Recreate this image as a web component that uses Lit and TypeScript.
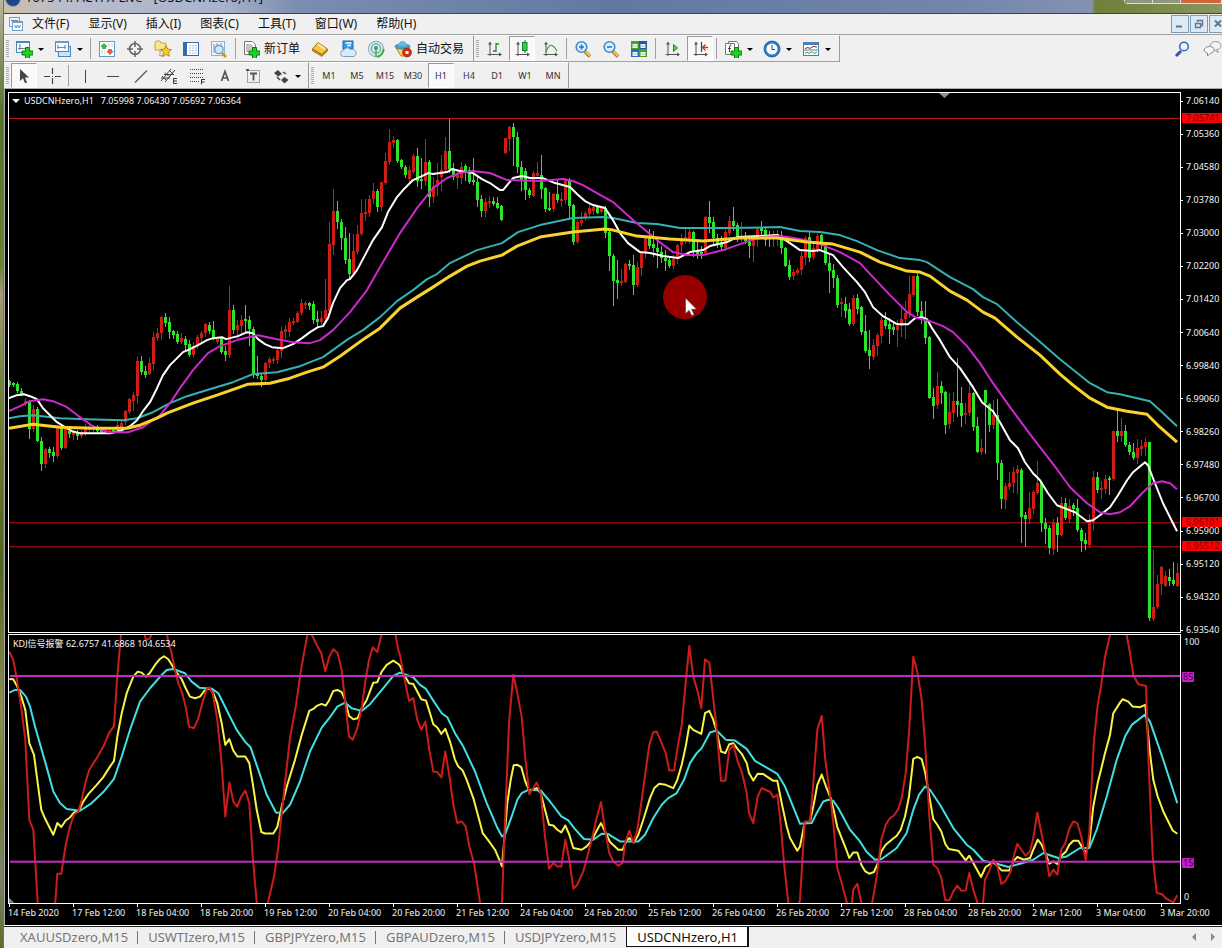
import { LitElement, html, css, svg, nothing } from "lit";
import { customElement, state } from "lit/decorators.js";
import { classMap } from "lit/directives/class-map.js";
import { styleMap } from "lit/directives/style-map.js";

/* One bar every 4 units: high, body top, body bottom, low, then u (red) or d (green). */
const CANDLES = `380,381,385,386d 382,383,385,386d 382,384,391,392d 388,391,394,395d 398,401,404,405u 400,401,429,438d 405,409,429,431u 407,409,441,441d
437,441,464,470d 448,449,464,467u 447,449,453,457d 447,452,456,461d 425,427,456,457u 425,427,448,449d 427,428,448,448u 429,431,434,437d
430,432,435,439u 430,432,436,439d 430,432,436,437u 424,428,434,435u 425,427,430,432u 427,428,430,432u 425,427,431,432d 427,429,432,433d
429,430,432,433u 429,430,432,433u 428,430,432,433d 422,425,430,431u 421,423,428,429u 410,411,422,424u 398,399,412,413u 392,395,401,410u
357,361,396,403u 356,361,372,374d 366,371,375,377d 358,363,374,374u 332,337,364,369u 328,333,338,340u 316,317,333,339u 313,317,323,326d
317,322,332,338d 330,331,335,338d 331,334,342,343d 333,338,342,343u 336,339,345,349d 340,344,355,356d 342,346,355,357u 335,337,346,348u
331,333,338,343u 323,324,333,336u 322,325,331,333d 321,330,338,339d 338,339,342,343u 337,338,352,353d 346,351,355,360d 286,310,355,357u
305,310,330,333d 320,325,330,338u 315,320,326,333u 305,319,321,333d 316,320,329,345d 327,329,374,377d 356,373,376,378d 373,376,380,386d
362,363,380,383u 357,359,363,367u 357,359,361,363u 347,350,360,363u 327,331,351,357u 325,329,332,338u 318,322,332,336u 318,321,323,324u
311,313,322,322u 299,303,313,314u 301,303,305,308u 302,303,306,309d 301,304,320,323d 311,319,322,327d 311,318,322,324u 279,310,319,321u
222,244,311,312u 189,211,245,254u 201,211,222,228d 219,222,238,249d 227,238,260,263d 233,259,274,278d 234,251,273,275u 225,234,252,253u
199,213,234,235u 199,212,214,220u 195,199,213,216u 183,191,199,203u 189,191,207,211d 182,182,207,210u 153,161,183,184u 129,142,162,164u
136,140,143,147u 139,140,161,162d 159,160,167,168d 165,167,175,177d 166,170,179,181u 154,156,172,173u 148,156,181,186d 158,179,181,188d
139,162,181,185u 160,162,197,206d 177,186,197,202u 163,180,186,195u 155,170,177,190u 137,151,170,172u 119,151,169,172d 163,169,177,179d
170,175,178,188u 162,167,178,183u 164,166,171,180d 167,170,182,183d 158,180,182,184d 175,182,200,206d 195,199,211,216d 198,202,211,216u
196,201,203,207u 197,201,204,205d 197,203,208,208d 205,206,220,220d 138,138,153,153u 126,127,139,150u 123,127,137,165d 132,137,167,172d
161,167,181,190d 168,171,190,199d 188,190,195,197d 171,173,196,196u 162,173,176,178u 155,175,189,198d 187,188,209,211d 192,208,210,210d
193,194,209,211u 180,194,200,202d 192,199,201,206u 178,180,200,203u 178,180,206,217d 204,205,242,244d 220,222,242,243u 212,220,223,225u
211,213,217,220u 205,208,214,217u 205,207,211,214u 205,207,213,213d 207,208,212,213u 206,208,233,237d 231,232,256,270d 254,256,281,305d
260,280,283,298d 269,281,283,285u 263,264,282,282u 260,264,266,269d 255,265,285,294d 262,267,285,286u 252,253,268,275u 237,238,253,257u
229,238,246,248d 231,244,248,256d 240,248,252,267d 246,252,258,262d 250,258,261,270d 257,260,266,267d 255,259,266,268u 244,245,259,263u
234,240,245,251u 228,237,241,243u 228,232,240,243u 231,232,252,256d 240,250,256,258d 246,252,256,258d 216,217,253,253u 201,217,223,232d
217,222,238,243d 234,238,244,247d 236,242,247,249d 230,232,248,250u 216,221,233,235u 207,221,226,230d 223,225,236,241d 222,237,239,241u
232,238,241,243d 238,240,246,257d 236,240,246,261u 228,229,240,246u 221,228,231,236d 226,230,240,245d 231,236,239,246d 231,234,239,246u
230,234,238,245u 231,235,248,253d 247,248,266,266d 260,265,277,279d 269,272,276,279u 268,270,273,274u 249,256,270,274u 236,238,257,264u
231,237,258,261d 243,248,257,258u 234,236,249,252u 234,235,244,248d 242,243,263,264d 255,263,271,292d 264,270,278,287d 275,278,305,307d
298,302,304,316u 297,304,311,317d 303,309,324,325d 295,298,324,325u 294,298,309,313d 306,307,332,334d 315,331,351,352d 330,350,356,368d
339,345,357,359u 333,335,346,355u 317,320,336,342u 312,320,326,328d 318,324,329,343d 322,327,330,334d 320,326,330,346u 308,319,326,336u
301,313,319,338u 276,294,314,317u 276,276,295,296u 273,276,312,315d 301,311,318,323d 301,320,338,343d 336,337,398,398d 388,397,406,418d
372,386,405,408u 381,386,393,403d 391,392,425,433d 393,412,424,428u 392,401,413,421u 358,401,405,416d 387,403,416,426d 403,413,415,423u
381,393,413,415u 392,393,427,430d 417,426,452,452d 439,448,452,454u 390,390,403,453d 403,404,425,431d 400,415,425,428u 399,415,463,479d
460,463,499,508d 483,486,500,508u 472,483,487,489u 467,472,483,492u 465,469,473,493u 468,470,517,542d 512,515,519,546d 492,508,519,523u
490,492,509,513u 461,483,493,494u 481,482,523,531d 518,523,529,543d 525,528,548,553d 519,523,549,554u 517,523,535,551d 497,503,535,535u
498,503,518,519d 499,506,519,521u 503,505,509,515d 499,508,530,531d 528,530,541,551d 533,540,544,549d 514,520,545,547u 471,477,522,529u
472,477,490,492d 481,488,490,498u 475,479,489,493u 476,478,480,494d 431,431,479,480u 411,431,436,441d 418,431,436,441u 425,431,445,446d
442,445,452,454d 443,452,458,459d 439,448,458,463u 440,446,449,455u 438,442,447,455u 442,442,618,620d 550,607,619,620u 575,584,607,608u
566,567,584,594u 571,576,586,586u 569,577,581,585d 562,580,584,585d 563,573,586,586u`
  .split(/\s+/)
  .map((bar) => {
    const [high, top, bottom, low] = bar.slice(0, -1).split(",").map(Number);
    return { high, top, bottom, low, up: bar.endsWith("u") };
  });

const FAST = `9,398 17,395 24,394 30,396 37,399 43,408 50,415 57,422 65,427 72,431 80,433 110,433 122,430 130,426 137,420 143,411 150,402 157,388 163,375 170,365 177,358 183,352 190,349 198,345 207,340 213,338 222,337 226,339 230,338 238,336 247,332 253,333 258,339 265,344 272,347 283,348 293,344 302,338 310,332 318,327 323,326 328,318 333,303 340,288 347,280 350,279 357,270 365,255 373,240 382,227 388,212 397,197 403,190 413,180 422,176 428,173 433,174 447,172 452,169 460,171 473,173 482,179 490,183 500,190 503,190 513,178 522,176 530,178 543,178 555,183 570,187 577,194 585,201 593,205 605,208 613,220 620,233 628,243 640,252 650,253 663,256 678,258 690,252 703,250 710,246 727,242 737,237 760,236 778,235 787,241 800,250 813,251 820,250 833,255 843,267 857,282 865,292 873,307 883,316 897,324 908,324 915,318 922,317 927,319 932,328 940,340 950,357 960,368 973,387 982,402 993,411 1000,422 1010,440 1018,448 1025,462 1033,473 1040,480 1048,493 1057,505 1075,512 1087,521 1093,520 1100,515 1110,507 1118,495 1127,480 1133,472 1145,462 1148,465 1153,478 1163,503 1173,523 1177,531`;
const MEDIUM = `9,411 20,406 30,401 43,399 53,401 67,407 80,417 93,426 108,432 128,432 143,427 160,415 170,403 180,388 193,370 208,353 220,346 240,339 258,335 277,339 293,342 310,343 320,340 333,330 350,312 367,290 383,262 400,233 417,208 433,188 447,178 460,173 473,171 490,173 507,180 540,181 563,179 573,181 583,185 597,193 613,202 633,220 657,240 673,252 687,255 703,255 723,250 743,243 760,237 780,236 800,239 820,244 840,252 860,263 873,277 890,295 907,312 917,318 930,321 943,326 953,332 967,346 980,363 993,383 1010,407 1033,438 1057,469 1070,487 1087,503 1100,512 1110,514 1120,512 1130,506 1143,492 1153,483 1162,481 1170,483 1177,489`;
const SLOW = `9,418 20,416 33,415 60,418 87,419 123,420 137,418 153,412 170,403 187,396 213,388 233,382 253,374 277,372 300,366 323,357 348,339 363,330 380,317 397,301 413,290 427,279 437,274 450,263 477,250 502,243 518,232 540,225 573,218 603,217 613,218 637,223 657,224 680,228 727,228 780,227 800,231 820,232 840,235 857,241 877,250 900,258 920,260 927,262 950,277 973,289 983,297 997,304 1017,322 1037,339 1060,359 1090,383 1107,392 1120,394 1150,401 1160,410 1177,426`;
const SLOWEST = `9,428 33,424 60,427 93,428 127,428 140,425 157,418 167,413 193,403 217,395 237,388 248,384 270,383 290,378 307,372 323,367 340,356 365,338 380,328 400,308 417,297 433,287 450,276 467,266 480,261 502,255 517,246 540,237 573,232 605,229 613,230 637,236 670,239 703,241 740,238 777,238 807,242 833,244 860,252 880,262 907,271 920,272 930,276 950,291 967,300 983,312 995,318 1017,337 1040,355 1060,374 1073,385 1090,398 1107,407 1127,411 1147,414 1160,427 1177,442`;

/* Oscillator samples come in three blocks of 400 units; each block counts in thirds of a unit. */
const joinBlocks = (...blocks: string[]) =>
  blocks
    .map((block, i) =>
      block
        .trim()
        .split(/\s+/)
        .map((p) => {
          const [x, y] = p.split(",").map(Number);
          return `${(i * 400 + x / 3).toFixed(1)},${(y / 3).toFixed(1)}`;
        })
        .join(" ")
    )
    .join(" ");

const LINE_J = joinBlocks(
  `28,65 40,90 52,155 64,235 76,330 88,570 100,600 113,818 118,850 160,850 166,818 172,732 184,732 197,645 210,590 222,555 235,545 245,510 257,455 268,420 290,385 310,350 327,310 342,288 351,150 363,15 370,-20 425,-20 438,30 450,25 465,-20 495,-20 505,35 514,65 525,120 535,160 547,190 558,235 567,290 582,295 595,265 608,215 620,178 628,172 638,190 652,270 664,390 676,560 688,458 700,515 711,531 724,500 736,482 748,520 758,680 770,818 778,850 796,850 804,818 822,740 834,660 845,550 857,440 870,325 888,225 903,120 920,25 928,-5 936,15 950,45 964,70 976,124 988,80 1000,58 1013,70 1025,120 1036,220 1047,320 1058,330 1072,295 1085,235 1096,155 1107,90 1118,52 1132,66 1144,15 1155,-20 1182,-10 1195,60`,
  `0,75 12,140 27,213 40,205 52,270 64,300 76,275 88,360 100,425 112,427 124,443 136,365 150,450 160,525 172,580 185,575 197,590 208,650 222,700 240,818 245,850 303,850 306,818 312,650 327,280 340,135 350,180 365,260 376,385 388,493 410,458 422,490 435,620 447,717 460,700 472,710 484,710 496,630 508,690 520,777 532,765 550,725 575,630 590,565 603,517 615,600 628,670 640,695 655,708 668,700 675,640 688,603 700,640 712,600 725,510 740,400 748,345 760,307 770,305 785,340 797,370 808,422 822,422 835,340 845,285 855,180 868,47 880,140 893,185 904,235 915,88 928,98 937,180 950,300 963,453 976,453 988,360 1000,345 1013,395 1025,425 1040,490 1047,550 1060,580 1073,500 1085,475 1100,482 1110,485 1120,503 1132,495 1140,560 1152,700 1165,818 1170,850 1192,850`,
  `0,810 14,575 30,575 40,460 52,300 65,258 76,390 90,495 100,580 112,715 125,760 140,818 143,830 155,830 160,780 172,762 184,818 190,835 212,835 217,818 230,740 244,630 257,585 270,565 282,557 295,538 305,505 317,430 327,310 340,80 352,125 365,210 376,350 388,560 400,705 412,715 424,745 436,812 448,812 460,785 472,768 484,783 497,782 508,730 520,780 532,818 538,835 548,830 555,750 567,725 580,690 592,710 604,763 615,755 632,725 640,685 652,642 664,660 677,678 690,665 700,625 712,548 722,600 736,670 748,740 760,720 772,735 784,660 796,640 808,597 820,575 832,580 845,625 857,692 868,610 873,500 882,330 893,225 903,170 915,80 930,15 935,-15 975,-10 980,15 990,70 1000,135 1015,163 1038,168 1045,380 1058,680 1070,790 1085,793 1100,808 1120,818 1132,797`
);
const LINE_K = joinBlocks(
  `28,147 40,148 52,170 64,200 76,240 88,340 102,375 113,460 124,540 136,568 148,592 160,615 172,580 184,592 197,572 210,563 222,548 235,545 250,515 265,493 290,465 310,442 327,415 342,393 352,320 365,250 380,190 400,140 413,125 425,128 437,140 450,128 465,105 480,87 492,79 505,88 520,112 530,128 545,148 557,175 570,200 585,205 600,200 613,183 628,174 640,190 652,220 665,280 676,345 688,328 700,362 712,380 736,380 748,400 758,460 770,540 784,607 795,611 820,611 832,592 845,530 862,465 885,390 905,315 928,243 940,237 950,228 965,222 977,227 988,210 1000,183 1012,180 1025,187 1035,210 1047,258 1060,268 1073,265 1085,235 1100,210 1120,158 1132,157 1145,125 1160,105 1180,92 1195,102`,
  `0,108 10,130 27,160 40,162 64,208 78,212 90,250 100,283 112,293 124,312 136,297 150,335 165,390 175,410 188,422 200,450 220,505 235,560 248,610 265,632 285,660 300,695 306,710 312,640 322,520 332,450 341,406 352,405 364,412 376,455 388,483 410,475 422,490 435,540 447,585 460,587 472,600 484,608 496,587 508,615 520,655 545,660 560,650 575,632 590,603 603,580 615,605 630,637 655,660 668,660 680,632 688,625 702,638 715,615 730,570 750,505 763,475 778,462 797,465 820,475 832,450 845,405 857,350 868,287 880,300 904,312 915,250 928,243 940,270 950,305 963,365 976,370 988,343 1000,340 1013,358 1025,372 1040,400 1047,430 1060,452 1073,432 1090,433 1120,453 1132,453 1145,520 1160,590 1170,625 1192,663`,
  `0,650 14,578 30,575 42,520 52,465 65,434 78,470 92,505 102,545 112,592 125,625 137,655 148,685 160,668 172,668 184,705 196,725 208,732 222,727 234,700 244,665 257,645 275,630 290,618 302,600 315,560 327,500 340,387 352,381 365,388 376,430 388,500 400,568 412,585 424,605 436,643 446,658 475,663 497,692 508,678 520,700 543,742 557,712 580,697 605,722 628,722 640,695 652,682 672,690 690,685 700,660 713,630 725,645 736,670 748,702 760,695 772,703 784,678 798,665 808,645 820,633 835,633 845,650 857,670 868,640 880,530 893,460 903,420 915,370 930,315 940,250 960,218 968,208 985,215 998,230 1020,232 1036,225 1042,290 1050,370 1060,450 1073,500 1090,545 1118,602 1132,612`
);
const LINE_D = joinBlocks(
  `28,188 45,180 60,180 78,200 90,230 105,290 125,360 145,430 160,485 180,520 200,538 240,543 275,520 310,487 342,447 365,380 390,300 420,215 450,175 485,135 500,120 520,117 555,130 575,155 598,173 635,176 655,190 685,250 710,300 735,335 752,353 775,420 800,495 828,548 848,550 870,525 900,455 930,365 965,293 990,262 1012,230 1035,218 1055,235 1085,243 1110,223 1150,175 1180,138`,
  `0,128 40,142 60,165 78,177 100,212 125,250 142,262 165,310 190,350 225,425 260,520 290,590 306,620 315,615 335,560 352,510 365,490 385,480 422,482 450,515 484,560 505,572 525,598 552,628 580,630 605,612 625,613 660,635 715,635 735,615 760,565 785,525 805,505 830,490 852,450 870,400 890,370 905,355 930,308 950,302 978,330 1005,332 1040,357 1065,393 1132,432 1155,470 1175,520`,
  `0,582 35,580 50,550 70,515 85,510 100,513 115,535 150,600 180,635 200,667 225,690 245,688 290,655 320,610 340,540 357,495 375,470 390,480 420,525 460,595 500,645 520,660 550,693 590,702 625,712 660,702 700,690 730,670 775,685 800,680 840,655 868,655 890,600 920,500 950,390 975,320 995,285 1035,254 1050,275 1090,390 1132,520`
);

const PRICES = ["7.06140", "7.05360", "7.04580", "7.03780", "7.03000", "7.02200", "7.01420", "7.00640", "6.99840", "6.99060", "6.98260", "6.97480", "6.96700", "6.95900", "6.95120", "6.94320", "6.93540"];
const TIMES = ["14 Feb 2020", "17 Feb 12:00", "18 Feb 04:00", "18 Feb 20:00", "19 Feb 12:00", "20 Feb 04:00", "20 Feb 20:00", "21 Feb 12:00", "24 Feb 04:00", "24 Feb 20:00", "25 Feb 12:00", "26 Feb 04:00", "26 Feb 20:00", "27 Feb 12:00", "28 Feb 04:00", "28 Feb 20:00", "2 Mar 12:00", "3 Mar 04:00", "3 Mar 20:00"];
const PRICE_LEVELS = [
  { label: "7.05741", y: 118 },
  { label: "6.96101", y: 522 },
  { label: "6.95512", y: 546 },
];
const OSC_LEVELS = [
  { label: "85", y: 676 },
  { label: "15", y: 862 },
];
const MENUS = ["文件(F)", "显示(V)", "插入(I)", "图表(C)", "工具(T)", "窗口(W)", "帮助(H)"];
const PERIODS = ["M1", "M5", "M15", "M30", "H1", "H4", "D1", "W1", "MN"];
const TABS = ["XAUUSDzero,M15", "USWTIzero,M15", "GBPJPYzero,M15", "GBPAUDzero,M15", "USDJPYzero,M15", "USDCNHzero,H1"];

const plus = svg`<path d="M10.500 7.500h4v3.500H18v4h-3.500v3.500h-4V15H7v-4h3.500z" fill="#22d022" stroke="#0a7d12" stroke-width="1"/>`;
const axes = svg`<path d="M5 3v13M2.500 14.500h13" stroke="#555" fill="none"/><path d="M5 1.500l-2 3h4zM17 14.500l-3-2v4z" fill="#555"/>`;
const lens = svg`<path d="M11 11.500l5 5" stroke="#a87410" stroke-width="3.500"/><path d="M11.500 11.500l4.500 4.500" stroke="#f0cf50" stroke-width="1.800"/><circle cx="7.500" cy="7" r="5.300" fill="#d8efff" stroke="#3d8ccc" stroke-width="1.600"/>`;

const ICONS: Record<string, unknown> = {
  newChart: svg`<rect x="1.500" y="1.500" width="13" height="11" fill="#f4faff" stroke="#4b86b8"/><path d="M1 2h14" stroke="#4b86b8" stroke-width="2"/><path d="M5 4v6M3 8.500h8" stroke="#777"/>${plus}`,
  profiles: svg`<rect x="4.500" y="6.500" width="12" height="10" fill="#cfe2f4" stroke="#4b86b8"/><rect x="1.500" y="1.500" width="13" height="10" fill="#f4faff" stroke="#4b86b8"/><path d="M1 2h14" stroke="#6b9cc8" stroke-width="2"/><path d="M4 5v4M3 7.500h9M11 5v4" stroke="#789"/>`,
  market: svg`<rect x="1.500" y="1.500" width="15" height="15" fill="#fff" stroke="#5c9ccc"/><path d="M6 3.500l3 3H7.500v2h-3v-2H3z" fill="#35c035" stroke="#158015" stroke-width=".6"/><path d="M12 14.500l-3-3h1.500v-2h3v2H15z" fill="#f06030" stroke="#b03010" stroke-width=".6"/><path d="M10 4h5M10 6h5M3 11h4M3 13h4" stroke="#bcd" stroke-dasharray="2 1"/>`,
  crosshair: svg`<circle cx="9" cy="9" r="5.500" fill="none" stroke="#666" stroke-width="1.500"/><path d="M9 1v6M9 11v6M1 9h6M11 9h6" stroke="#666" stroke-width="1.500"/>`,
  favorites: svg`<path d="M1 3q0-2 2-2h3l1 2h5v7H1z" fill="#fbe68a" stroke="#b99528" stroke-width=".8"/><path d="M6 11v5h4" stroke="#555" stroke-dasharray="1 1" fill="none"/><path d="M12 5.500l1.700 3.600 3.800.5-2.800 2.700.7 4-3.400-1.900-3.400 1.900.7-4-2.800-2.700 3.800-.5z" fill="#f8c832" stroke="#b07a10" stroke-width=".8"/>`,
  data: svg`<rect x="1.500" y="2.500" width="15" height="13" fill="#fff" stroke="#336ca8"/><path d="M3.500 2v14" stroke="#2f6cb0" stroke-width="3"/><path d="M7 5.500h9M7 8h9M7 10.500h9M7 13h9" stroke="#a9c4dd" stroke-dasharray="2 1"/>`,
  tester: svg`<rect x="1.500" y="1.500" width="13" height="14" fill="#eef5fb" stroke="#8db3d2"/><path d="M4 4v9M7 3v9M11 3v4" stroke="#7898b4"/><path d="M12 13l4 4" stroke="#c79520" stroke-width="2.500"/><circle cx="9" cy="9.500" r="4.200" fill="#cfe6f8" stroke="#6c9cc4" stroke-width="1.300"/>`,
  order: svg`<path d="M2.500 1.500h8l3 3v10h-11z" fill="#fff" stroke="#777"/><path d="M4 5h6M4 7h7M4 9h6M4 11h4" stroke="#888"/>${plus}`,
  gold: svg`<path d="M7 2.500l9.500 6.500-5.500 5.500L1.500 9z" fill="#f5c84a" stroke="#a87414"/><path d="M1.500 9l9.500 5.500 5.500-5.500v2L11 16.500 1.500 11z" fill="#c98c1c" stroke="#96660e" stroke-width=".6"/><path d="M7 4l7 5" stroke="#fdeaa0" stroke-width="2"/>`,
  cloud: svg`<rect x="4" y="1" width="10" height="8" fill="#2f9ae8" stroke="#1370b8"/><path d="M6.500 3h6M8 5.500h4" stroke="#fff" stroke-width="1.500"/><path d="M4.500 16.500a3 3 0 0 1 0-6 4 4 0 0 1 7-1 3.500 3.500 0 0 1 3.500 7z" fill="#dce8f6" stroke="#7e9cc4"/>`,
  signal: svg`<circle cx="9" cy="9" r="7.600" fill="#d9ecdf" stroke="#8fb8c8" stroke-width="1.200"/><circle cx="9" cy="8.500" r="4.600" fill="none" stroke="#68a8c0" stroke-width="1.300"/><path d="M10 17a8 8 0 0 0 6.600-8" stroke="#3cb43c" stroke-width="2" fill="none"/><circle cx="9" cy="8" r="2" fill="#3c9a5c"/><path d="M9 9v8" stroke="#3cb43c" stroke-width="1.500"/>`,
  auto: svg`<path d="M2 8l7-2 6 2-1 8H7z" fill="#f8d450" stroke="#b48818"/><ellipse cx="8.500" cy="6.500" rx="7.500" ry="2.600" fill="#4ba0d0" stroke="#23709c" stroke-width=".7"/><path d="M4.500 6q0-5 4-5t4 5z" fill="#68b8e0"/><circle cx="13" cy="12.500" r="4.500" fill="#d42c18" stroke="#981808" stroke-width=".6"/><rect x="11.500" y="11" width="3" height="3" fill="#fff"/>`,
  bars: svg`${axes}<path d="M11 3v9M11 4h3M8 11h3" stroke="#228b22" stroke-width="1.300"/>`,
  candles: svg`${axes}<path d="M12 0v13" stroke="#146414"/><rect x="9.500" y="2.500" width="4.500" height="8" fill="#30d048" stroke="#128028"/>`,
  line: svg`${axes}<path d="M5 12q3-8 6-6.500t5 5.500" stroke="#3a9c3a" stroke-width="1.200" fill="none"/>`,
  zoomIn: svg`${lens}<path d="M5 7h5M7.500 4.500v5" stroke="#2272b8" stroke-width="1.500"/>`,
  zoomOut: svg`${lens}<path d="M5 7h5" stroke="#2272b8" stroke-width="1.500"/>`,
  tile: svg`<rect x="1" y="1" width="8" height="8" fill="#48a028"/><rect x="9" y="1" width="8" height="8" fill="#2258a8"/><rect x="1" y="9" width="8" height="8" fill="#2d68b8"/><rect x="9" y="9" width="8" height="8" fill="#48a028"/><path d="M2.500 4h5v4h-5zM10.500 4h5v4h-5zM2.500 12h5v4h-5zM10.500 12h5v4h-5z" fill="#f2f8f2"/><path d="M3 6h4M11 6h4M3 14h4M11 14h4" stroke="#9cb"/>`,
  play: svg`${axes}<path d="M10.500 4.500v7l4-3.500z" fill="#58d058" stroke="#1c8c1c"/>`,
  shift: svg`${axes}<path d="M10.500 2v10" stroke="#446" stroke-width="1.300"/><path d="M17 7.500h-5M14.500 4.500l-3 3 3 3" stroke="#b44218" stroke-width="1.300" fill="none"/>`,
  indicators: svg`<path d="M4.500 3.500v-2h8l2 2v10h-3" fill="#fff" stroke="#777"/><path d="M1.500 3.500h9v11h-9z" fill="#fff" stroke="#777"/><path d="M7.500 5q-2-.5-2 2v5M4 8.500h3" stroke="#444" fill="none"/>${plus}`,
  clock: svg`<circle cx="9" cy="9" r="8" fill="#2f7cc4" stroke="#1c5490" stroke-width=".8"/><circle cx="9" cy="9" r="5.600" fill="#f4faff"/><path d="M9 5v4.500h3" stroke="#345" fill="none"/>`,
  template: svg`<rect x="1.500" y="2.500" width="15" height="13" fill="#fff" stroke="#4682b4"/><path d="M1 3.500h16" stroke="#4682b4" stroke-width="3"/><path d="M3 8.500l3-1 2 1 3-2 4 .5" stroke="#8c3020" fill="none"/><path d="M2 10h14" stroke="#4682b4"/><path d="M3 13.500l2-1.500 2 1.500 3-2 2 2 3-1.500" stroke="#389838" fill="none"/>`,
  arrow: svg`<path d="M5 2v12l3-2.700 2 5 2-.9-2-4.800h4z" fill="#444"/>`,
  cross: svg`<path d="M9.500 1v6M9.500 11v6M1 9.500h6M12 9.500h6" stroke="#444" stroke-width="1.200"/><path d="M9 9.500h1" stroke="#444"/>`,
  vline: svg`<path d="M9.500 3v13" stroke="#444"/>`,
  hline: svg`<path d="M3 9.500h12" stroke="#444"/>`,
  trend: svg`<path d="M3 15.500L15 3.500" stroke="#555" stroke-width="1.200"/>`,
  channel: svg`<path d="M1 14L11 2M5 15L15 3M2 9l4 4M5 5.500l4 4M9 3l4 4M1 11h9M4 7.500h10" stroke="#444" fill="none"/><path d="M17 11.500h-3.500v5H17M13.500 14H17" stroke="#333" fill="none"/>`,
  fibo: svg`<path d="M2 2.500h14M2 6.500h14M2 10.500h14M2 14.500h9" stroke="#444" stroke-dasharray="1 1"/><path d="M17 12.500h-3.500v5M13.500 15h3" stroke="#333" fill="none"/>`,
  text: svg`<path d="M5.500 14L9 4.500 12.500 14M6.800 11h4.500" stroke="#555" stroke-width="1.700" fill="none"/>`,
  label: svg`<rect x="3.500" y="3.500" width="12" height="12" fill="none" stroke="#555" stroke-dasharray="1 1"/><path d="M6 6.500h7M9.500 6.500v7" stroke="#555" stroke-width="1.800"/><path d="M2 2h3v2H2z" fill="#555"/>`,
  arrows: svg`<path d="M6 3l4 4-4 2.500L2 6z" fill="#444"/><path d="M12.500 10l4 3-4 3.500-3.500-3.500z" fill="#444"/><path d="M8 13l-3-3M11 5l3 2" stroke="#444" stroke-width="1.500"/>`,
  search: svg`<path d="M8 11l-5 5" stroke="#2c56b0" stroke-width="3"/><circle cx="11" cy="6.500" r="4.300" fill="#eef4fc" stroke="#3c68bc" stroke-width="1.600"/>`,
  chat: svg`<path d="M12.500 1.500c7 0 7 8 1 8l2 3-5-3c-5-1-4-8 2-8z" fill="#f4f4f4" stroke="#999"/><path d="M6.500 6.500c6 0 6 6 1 6.500l-3 3v-3c-5-1-4-6.500 2-6.500z" fill="#fafafa" stroke="#888"/>`,
};

const icon = (name: string) => html`<svg class="icon" viewBox="0 0 18 18" aria-hidden="true">${ICONS[name]}</svg>`;

type Tool = { id: string; name: string; menu?: boolean; text?: string; on?: boolean } | "sep";

const STANDARD: Tool[] = [
  { id: "newChart", name: "新图表", menu: true },
  { id: "profiles", name: "配置文件", menu: true },
  "sep",
  { id: "market", name: "市场报价" },
  { id: "crosshair", name: "数据窗口" },
  { id: "favorites", name: "导航" },
  { id: "data", name: "终端" },
  { id: "tester", name: "策略测试" },
  "sep",
  { id: "order", name: "新订单", text: "新订单" },
  { id: "gold", name: "编辑器" },
  { id: "cloud", name: "云" },
  { id: "signal", name: "信号" },
  { id: "auto", name: "自动交易", text: "自动交易" },
];
const CHARTS: Tool[] = [
  { id: "bars", name: "柱状图" },
  { id: "candles", name: "阴阳烛", on: true },
  { id: "line", name: "折线图" },
  "sep",
  { id: "zoomIn", name: "放大" },
  { id: "zoomOut", name: "缩小" },
  { id: "tile", name: "平铺" },
  "sep",
  { id: "play", name: "自动滚动" },
  { id: "shift", name: "图表平移", on: true },
  "sep",
  { id: "indicators", name: "指标", menu: true },
  { id: "clock", name: "周期", menu: true },
  { id: "template", name: "模板", menu: true },
];
const DRAWING: Tool[] = [
  { id: "arrow", name: "光标", on: true },
  { id: "cross", name: "十字准线" },
  "sep",
  { id: "vline", name: "垂直线" },
  { id: "hline", name: "水平线" },
  { id: "trend", name: "趋势线" },
  { id: "channel", name: "等距通道" },
  { id: "fibo", name: "斐波纳契" },
  { id: "text", name: "文字" },
  { id: "label", name: "文字标签" },
  { id: "arrows", name: "箭头", menu: true },
];

@customElement("app-root")
export class AppRoot extends LitElement {
  @state() private period = "H1";
  @state() private tab = "USDCNHzero,H1";

  static styles = css`
    :host {
      display: flex;
      height: 100vh;
      overflow: hidden;
      background: #f0f0f0;
      color: #111;
      font: 12px/16px "Noto Sans", "Noto Sans CJK SC", sans-serif;
    }
    * { box-sizing: border-box; }
    button {
      margin: 0;
      padding: 0;
      border: 0;
      background: none;
      color: inherit;
      font: inherit;
      white-space: nowrap;
    }
    .desktop {
      flex: none;
      width: 4px;
      border-right: 1px solid #707468;
      background: linear-gradient(#b9b6a0, #55702a 12%, #6a8036 28%, #a49a78 31%, #76823a 40%, #4f6420 60%, #8d8f50 75%, #6d7a34 85%, #7c8468 92%, #5c6c28);
    }
    .window { flex: 1; min-width: 0; display: flex; flex-direction: column; }
    .title {
      flex: none;
      height: 14px;
      display: flex;
      align-items: flex-end;
      justify-content: space-between;
      overflow: hidden;
      border-bottom: 1px solid #39435a;
      background: linear-gradient(90deg, #cbbfa6, #b9bccb 5%, #a9b3cb 18%, #7b8db0 24%, #6179a2 50%, #7385ab 78%, #8492b2 89.300%, #6f8038 89.600%, #8a9560);
    }
    .caption { display: flex; align-items: flex-end; gap: 4px; padding-left: 1px; margin-bottom: 6px; font-size: 13px; line-height: 20px; color: #10141c; }
    .badge { width: 16px; height: 16px; border-radius: 8px; background: #1f4685; border: 1px solid #86a0c8; }
    .controls { display: flex; margin-bottom: 9px; border: 1px solid #ddd; border-top: 0; border-radius: 0 0 0 4px; }
    .controls button { width: 28px; height: 16px; background: #8f9780; border-right: 1px solid #ddd; }
    .controls .quit { width: 40px; background: #d2653c; border: 0; }
    .menus { flex: none; height: 21px; display: flex; align-items: center; padding-left: 4px; border-bottom: 1px solid #a0a0a0; }
    .menus .icon { width: 16px; height: 16px; margin-right: 8px; }
    .menus nav { flex: 1; display: flex; gap: 19px; }
    .mdi { display: flex; gap: 1px; }
    .mdi button { width: 18px; height: 18px; border: 1px solid #7f9bb4; background: #dceaf6; }
    .mdi button:last-child { width: 13px; border-right: 0; }
    .mdi svg { display: block; width: 16px; height: 16px; }
    .bar { flex: none; height: 27px; display: flex; }
    .bar.lower { height: 26px; font-size: 9px; color: #333; }
    .group {
      display: flex;
      align-items: stretch;
      padding-right: 3px;
      border-top: 1px solid #fff;
      border-right: 1px solid #999;
      border-bottom: 1px solid #a0a0a0;
    }
    .lower .group { border-bottom: 0; padding-right: 2px; }
    .lower .periods { padding-right: 1px; }
    .grip { width: 6px; margin: 4px 0; border-left: 2px solid #f0f0f0; }
    .grip::before { content: ""; display: block; width: 3px; height: 100%; background: repeating-linear-gradient(#aaa 0 1px, #f0f0f0 1px 2px); }
    .tool { width: 28px; display: flex; align-items: center; justify-content: center; padding-top: 1px; }
    .tool.menu { width: 39px; gap: 5px; justify-content: flex-start; padding-left: 5px; }
    .tool.wide { width: auto; gap: 4px; padding: 1px 6px 0 4px; }
    .tool.on { border: 1px solid #999; border-right-color: #fff; border-bottom-color: #fff; background: #f9f9f9; margin: 0 1px; width: 26px; }
    .caret { width: 0; border: 3px solid transparent; border-top-color: #000; border-bottom: 0; }
    .sep { width: 1px; margin: 2px 2px; background: #a0a0a0; }
    .icon { flex: none; display: block; width: 18px; height: 18px; }
    .spacer { flex: 1; }
    .extras { display: flex; align-items: center; gap: 10px; overflow: hidden; }
    .extras .icon { width: 20px; }
    .chart {
      flex: 1;
      min-height: 0;
      display: grid;
      grid-template: 2fr 1fr 21px / 1fr 41px;
      padding: 3px 0 0 3px;
      border: solid #aaa;
      border-width: 1px 0 1px 1px;
      border-bottom-color: #fff;
      background: #000;
      color: #f4f4f4;
      font-size: 9px;
      line-height: 12px;
      overflow: hidden;
    }
    .plot { position: relative; min-height: 0; border: 1px solid #fff; overflow: hidden; }
    .plot.osc { margin-top: 1px; }
    .plot svg { display: block; width: 100%; height: 100%; }
    .legend { position: absolute; top: 2px; left: 3px; display: flex; align-items: center; gap: 4px; }
    .quote { display: flex; gap: 7px; }
    .osc .legend { top: 3px; left: 4px; }
    .down { border: 4px solid transparent; border-top-color: #fff; border-bottom: 0; }
    .scale { position: relative; min-height: 0; line-height: 10px; }
    .ticks { height: 100%; display: flex; flex-direction: column; justify-content: space-between; }
    .prices { height: calc(100% + 2px); padding-top: 4px; }
    .ticks.bounds { padding: 4px 0 2px 3px; }
    .price { display: flex; align-items: center; gap: 3px; }
    .price::before { content: ""; width: 2px; height: 1px; background: #fff; }
    .tag { position: absolute; left: 1px; right: 0; padding-left: 4px; background: #f00; color: #7c0000; transform: translateY(-50%); }
    .tag.small { right: auto; padding: 0 1px; background: #c41cc4; color: #3c083c; }
    .times { grid-column: 1 / -1; display: flex; margin-right: -2px; }
    .time { flex: 1 1 0; min-width: 0; white-space: nowrap; }
    .time::before { content: ""; display: block; width: 1px; height: 3px; margin-left: 1px; background: #fff; }
    .tabs { flex: none; height: 22px; display: flex; align-items: flex-start; padding-left: 6px; border-top: 1px solid #222; color: #777; font-size: 13px; }
    .tabs button { height: 20px; padding: 0 9px 0 10px; line-height: 20px; }
    .tabs .tab { background: linear-gradient(#777, #777) right center / 1px 13px no-repeat; padding-right: 10px; }
    .tabs .tab.last { background: none; }
    .tabs .active { background: #fff; color: #111; border: 1px solid #111; border-top: 0; border-right-width: 2px; }
    .tabs .nudge { width: 19px; height: 19px; padding: 0; display: flex; align-items: center; justify-content: center; }
    .tabs .nudge svg { width: 6px; height: 8px; }
  `;

  private tool(t: Tool) {
    if (t === "sep") return html`<span class="sep"></span>`;
    return html`<button
      class=${classMap({ tool: true, menu: !!t.menu, wide: !!t.text, on: !!t.on })}
      aria-label=${t.name}
    >${icon(t.id)}${t.text ?? nothing}${t.menu ? html`<span class="caret"></span>` : nothing}</button>`;
  }

  private line(points: string, color: string, width: number) {
    return svg`<polyline points=${points} fill="none" stroke=${color} stroke-width=${width} stroke-linejoin="round" />`;
  }

  private pricePlot() {
    return html`<div class="plot">
      <svg viewBox="9 93 1171 539" preserveAspectRatio="none" role="img" aria-label="USDCNHzero,H1">
        ${PRICE_LEVELS.map((l) => svg`<rect x="9" y=${l.y} width="1171" height="1" fill="#c01414" />`)}
        <g shape-rendering="crispEdges">
          ${CANDLES.map((c, i) => {
            const x = 9 + i * 4;
            const fill = c.up ? "#cf1c14" : "#2ce428";
            return svg`<rect x=${x} y=${c.high} width="1" height=${c.low - c.high + 1} fill=${fill} />
              <rect x=${x - 1} y=${c.top} width="3" height=${Math.max(1, c.bottom - c.top)} fill=${fill} />`;
          })}
        </g>
        ${this.line(SLOW, "#34b2b2", 2)}
        ${this.line(FAST, "#fff", 2)}
        ${this.line(MEDIUM, "#cc2acc", 2)}
        ${this.line(SLOWEST, "#fad22e", 3)}
        <path d="M939 93h11l-5.500 5z" fill="#889090" />
        <circle cx="685" cy="297" r="22" fill="#980000" />
        <path d="M685.500 298v15.500l3.600-3.400 2.600 5.400 2.400-1.200-2.500-5.200h5z" fill="#fff" stroke="#333" stroke-width=".5" />
      </svg>
      <div class="legend">
        <span class="down"></span>
        <div class="quote"><span>USDCNHzero,H1</span><span>7.05998 7.06430 7.05692 7.06364</span></div>
      </div>
    </div>`;
  }

  private oscPlot() {
    return html`<div class="plot osc">
      <svg viewBox="9 5 1171 268" preserveAspectRatio="none" role="img" aria-label="KDJ">
        ${this.line(LINE_K, "#f8f444", 2)}
        ${this.line(LINE_D, "#40e0e0", 2)}
        ${this.line(LINE_J, "#cc1c1c", 2)}
        ${OSC_LEVELS.map((l) => svg`<rect x="10" y=${l.y - 631} width="1170" height="2" fill="#c42cc4" />`)}
        <path d="M9 268v5h5z" fill="#889090" />
      </svg>
      <div class="legend">KDJ信号报警 62.6757 41.6868 104.6534</div>
    </div>`;
  }

  render() {
    return html`
      <div class="desktop"></div>
      <div class="window">
        <header class="title">
          <div class="caption"><span class="badge"></span><span>107544: ACTFX-Live - [USDCNHzero,H1]</span></div>
          <div class="controls">
            <button aria-label="最小化"></button><button aria-label="最大化"></button><button class="quit" aria-label="关闭"></button>
          </div>
        </header>
        <div class="menus">
          <svg class="icon" viewBox="0 0 16 16" aria-hidden="true">
            <rect x="1.500" y="1.500" width="10" height="9" fill="#eaf4fc" stroke="#6d9fc8" />
            <rect x="4.500" y="5.500" width="10" height="9" fill="#fff" stroke="#6d9fc8" />
            <path d="M4 6h11" stroke="#6d9fc8" stroke-width="2" />
            <path d="M3 4.500h7M6.500 9l1.500 3 1.500-3 1.500 3 1.500-3" stroke="#5a88b0" fill="none" />
          </svg>
          <nav>${MENUS.map((m) => html`<button>${m}</button>`)}</nav>
          <div class="mdi">
            <button aria-label="最小化"><svg viewBox="0 0 16 16"><path d="M4 10.500h6" stroke="#60748c" stroke-width="2" /></svg></button>
            <button aria-label="还原"><svg viewBox="0 0 16 16"><path d="M6.500 6V4.500h5v5H10M4.500 7.500h5v4h-5z" stroke="#60748c" stroke-width="1.400" fill="none" /></svg></button>
            <button aria-label="关闭"><svg viewBox="0 0 16 16"><path d="M5 4.500l6 6M11 4.500l-6 6" stroke="#60748c" stroke-width="2" /></svg></button>
          </div>
        </div>
        <div class="bar">
          <div class="group"><span class="grip"></span>${STANDARD.map((t) => this.tool(t))}</div>
          <div class="group"><span class="grip"></span>${CHARTS.map((t) => this.tool(t))}</div>
          <span class="spacer"></span>
          <div class="extras">
            <button aria-label="搜索">${icon("search")}</button><button aria-label="聊天">${icon("chat")}</button>
          </div>
        </div>
        <div class="bar lower">
          <div class="group"><span class="grip"></span>${DRAWING.map((t) => this.tool(t))}</div>
          <div class="group periods">
            <span class="grip"></span>
            ${PERIODS.map(
              (p) => html`<button class=${classMap({ tool: true, on: p === this.period })} @click=${() => (this.period = p)}>${p}</button>`
            )}
          </div>
        </div>
        <main class="chart">
          ${this.pricePlot()}
          <div class="scale">
            <div class="ticks prices">${PRICES.map((p) => html`<span class="price">${p}</span>`)}</div>
            ${PRICE_LEVELS.map(
              (l) => html`<span class="tag" style=${styleMap({ top: `${((l.y - 92) / 541) * 100}%` })}>${l.label}</span>`
            )}
          </div>
          ${this.oscPlot()}
          <div class="scale">
            <div class="ticks bounds"><span>100</span><span>0</span></div>
            ${OSC_LEVELS.map(
              (l) => html`<span class="tag small" style=${styleMap({ top: `${((l.y - 632) / 271) * 100}%` })}>${l.label}</span>`
            )}
          </div>
          <div class="times">${TIMES.map((t) => html`<span class="time">${t}</span>`)}</div>
        </main>
        <div class="tabs">
          ${TABS.map(
            (t, i) => html`<button
              class=${classMap({ tab: t !== this.tab, active: t === this.tab, last: TABS[i + 1] === this.tab })}
              @click=${() => (this.tab = t)}
            >${t}</button>`
          )}
          <span class="spacer"></span>
          <button class="nudge" aria-label="向左"><svg viewBox="0 0 6 8"><path d="M5 0v8L1 4z" fill="#888" /></svg></button>
          <button class="nudge" aria-label="向右"><svg viewBox="0 0 6 8"><path d="M1 0v8l4-4z" fill="#888" /></svg></button>
        </div>
      </div>
    `;
  }
}
